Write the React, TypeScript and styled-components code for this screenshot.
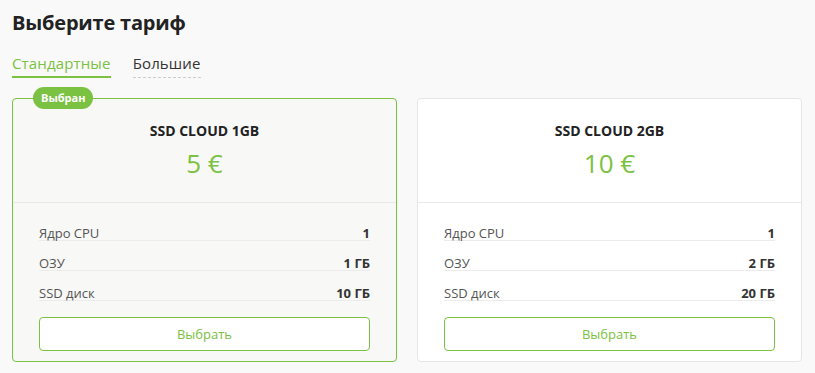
import styled, {createGlobalStyle} from 'styled-components';

const GREEN = '#7bc142';

const GlobalStyle = createGlobalStyle`
  html, body {
    margin: 0;
    background: #f9f9f9;
    font-family: 'Open Sans', 'Noto Sans', sans-serif;
  }
`;

const Page = styled.div`
  padding: 10px 13px 0 12px;
`;

const Title = styled.h2`
  margin: 0;
  font-size: 20px;
  line-height: 26px;
  font-weight: 700;
  color: #222;
  letter-spacing: -0.2px;
`;

const Tabs = styled.div`
  display: flex;
  gap: 22px;
  margin-top: 17px;
`;

const Tab = styled.div<{$active?: boolean}>`
  font-size: 15px;
  line-height: 20px;
  letter-spacing: 0.15px;
  color: ${p => (p.$active ? GREEN : '#333')};
  padding-bottom: 3px;
  border-bottom: ${p => (p.$active ? `2px solid ${GREEN}` : '1px dashed #ccc')};
  cursor: pointer;
`;

const Grid = styled.div`
  display: grid;
  grid-template-columns: 1fr 1fr;
  gap: 20px;
  margin-top: 20px;
`;

const Card = styled.div<{$selected?: boolean}>`
  position: relative;
  border: 1px solid ${p => (p.$selected ? GREEN : '#e6e6e6')};
  border-radius: 4px;
  background: ${p => (p.$selected ? '#f8f8f7' : '#fff')};
`;

const Badge = styled.div`
  position: absolute;
  top: -12px;
  left: 20px;
  background: ${GREEN};
  color: #fff;
  font-size: 11px;
  font-weight: 700;
  line-height: 22px;
  padding: 0 8px;
  border-radius: 11px;
`;

const Head = styled.div`
  display: flex;
  flex-direction: column;
  align-items: center;
  padding: 22px 0 23px;
  border-bottom: 1px solid #e8e8e8;
`;

const Name = styled.div`
  font-size: 14px;
  font-weight: 700;
  color: #222;
  line-height: 20px;
`;

const Price = styled.div`
  margin-top: 6px;
  font-size: 26px;
  line-height: 32px;
  color: ${GREEN};
`;

const Body = styled.div`
  padding: 8px 26px 10px;
`;

const Row = styled.div`
  display: flex;
  justify-content: space-between;
  align-items: flex-end;
  height: 30px;
  box-sizing: border-box;
  border-bottom: 1px solid #ececec;
  font-size: 13px;
  line-height: 13px;
  color: #555;
`;

const Value = styled.span`
  font-weight: 700;
  font-size: 13px;
  color: #333;
`;

const Button = styled.button`
  display: block;
  width: 100%;
  height: 34px;
  margin-top: 16px;
  background: #fff;
  border: 1px solid ${GREEN};
  border-radius: 4px;
  color: ${GREEN};
  font-family: inherit;
  font-size: 13px;
  cursor: pointer;
`;

const plans = [
  {name: 'SSD CLOUD 1GB', price: '5 €', ram: '1 ГБ', disk: '10 ГБ', selected: true},
  {name: 'SSD CLOUD 2GB', price: '10 €', ram: '2 ГБ', disk: '20 ГБ', selected: false},
];

export default function App() {
  return (
    <Page>
      <GlobalStyle />
      <Title>Выберите тариф</Title>
      <Tabs>
        <Tab $active>Стандартные</Tab>
        <Tab>Большие</Tab>
      </Tabs>
      <Grid>
        {plans.map(plan => (
          <Card $selected={plan.selected} key={plan.name}>
            {plan.selected && <Badge>Выбран</Badge>}
            <Head>
              <Name>{plan.name}</Name>
              <Price>{plan.price}</Price>
            </Head>
            <Body>
              <Row>
                <span>Ядро CPU</span>
                <Value>1</Value>
              </Row>
              <Row>
                <span>ОЗУ</span>
                <Value>{plan.ram}</Value>
              </Row>
              <Row>
                <span>SSD диск</span>
                <Value>{plan.disk}</Value>
              </Row>
              <Button>Выбрать</Button>
            </Body>
          </Card>
        ))}
      </Grid>
    </Page>
  );
}
